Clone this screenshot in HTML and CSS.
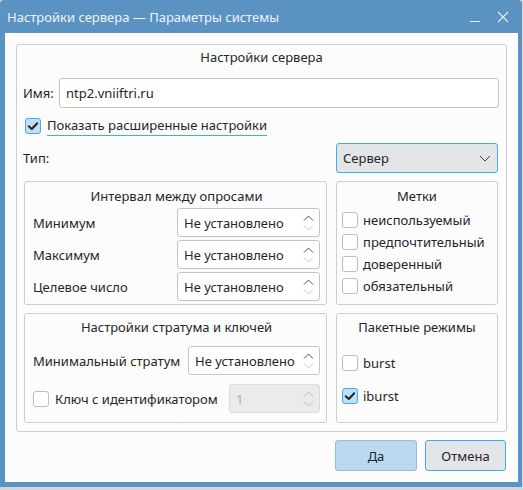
FILE: index.html
```html
<!DOCTYPE html>
<html lang="ru">
<head>
<meta charset="utf-8">
<title>Настройки сервера</title>
<link rel="stylesheet" href="styles.css">
</head>
<body>
<div class="window">
  <div class="titlebar">
    <span class="title">Настройки сервера — Параметры системы</span>
    <span class="wm-buttons">
      <svg class="wm-min" width="12" height="12" viewBox="0 0 12 12"><path d="M1 10.5 H11" stroke="#e6eef6" stroke-width="1" fill="none"/></svg>
      <svg class="wm-close" width="12" height="12" viewBox="0 0 12 12"><path d="M1 1 L11 11 M11 1 L1 11" stroke="#e6eef6" stroke-width="1.1" fill="none"/></svg>
    </span>
  </div>
  <div class="client">
    <div class="group outer">
      <div class="gtitle">Настройки сервера</div>
      <div class="name-row">
        <span class="lbl">Имя:</span>
        <div class="input">ntp2.vniiftri.ru</div>
      </div>
      <div class="check-row main-check">
        <span class="cb checked"><svg width="16" height="16" viewBox="0 0 16 16"><path d="M3.8 8.2 L6.8 11 L12.2 5.2" stroke="#232629" stroke-width="2" fill="none" stroke-linecap="round" stroke-linejoin="round"/></svg></span>
        <span class="focus-label">Показать расширенные настройки</span>
      </div>
      <div class="cols type-row">
        <span class="lbl">Тип:</span>
        <div class="combo">
          <span>Сервер</span>
          <svg width="12" height="7" viewBox="0 0 12 7"><path d="M1 1 L6 6 L11 1" stroke="#3b3e41" stroke-width="1" fill="none"/></svg>
        </div>
      </div>
      <div class="cols row1">
        <div class="group interval">
          <div class="gtitle">Интервал между опросами</div>
          <div class="form-row"><span class="lbl">Минимум</span>
            <div class="spin w143"><span>Не установлено</span>
              <span class="arrows"><svg width="11" height="16" viewBox="0 0 11 16"><path d="M1 5.5 L5.5 1 L10 5.5" stroke="#4d5053" fill="none"/><path d="M1 10.5 L5.5 15 L10 10.5" stroke="#c4c6c8" fill="none"/></svg></span>
            </div>
          </div>
          <div class="form-row"><span class="lbl">Максимум</span>
            <div class="spin w143"><span>Не установлено</span>
              <span class="arrows"><svg width="11" height="16" viewBox="0 0 11 16"><path d="M1 5.5 L5.5 1 L10 5.5" stroke="#4d5053" fill="none"/><path d="M1 10.5 L5.5 15 L10 10.5" stroke="#c4c6c8" fill="none"/></svg></span>
            </div>
          </div>
          <div class="form-row"><span class="lbl">Целевое число</span>
            <div class="spin w143"><span>Не установлено</span>
              <span class="arrows"><svg width="11" height="16" viewBox="0 0 11 16"><path d="M1 5.5 L5.5 1 L10 5.5" stroke="#4d5053" fill="none"/><path d="M1 10.5 L5.5 15 L10 10.5" stroke="#c4c6c8" fill="none"/></svg></span>
            </div>
          </div>
        </div>
        <div class="group marks">
          <div class="gtitle">Метки</div>
          <div class="check-row mark"><span class="cb"></span><span>неиспользуемый</span></div>
          <div class="check-row mark"><span class="cb"></span><span>предпочтительный</span></div>
          <div class="check-row mark"><span class="cb"></span><span>доверенный</span></div>
          <div class="check-row mark"><span class="cb"></span><span>обязательный</span></div>
        </div>
      </div>
      <div class="cols row2">
        <div class="group stratum">
          <div class="gtitle">Настройки стратума и ключей</div>
          <div class="form-row"><span class="lbl">Минимальный стратум</span>
            <div class="spin w132"><span>Не установлено</span>
              <span class="arrows"><svg width="11" height="16" viewBox="0 0 11 16"><path d="M1 5.5 L5.5 1 L10 5.5" stroke="#4d5053" fill="none"/><path d="M1 10.5 L5.5 15 L10 10.5" stroke="#c4c6c8" fill="none"/></svg></span>
            </div>
          </div>
          <div class="form-row key-row">
            <span class="check-row"><span class="cb"></span><span>Ключ с идентификатором</span></span>
            <div class="spin w91 disabled"><span>1</span>
              <span class="arrows"><svg width="11" height="16" viewBox="0 0 11 16"><path d="M1 5.5 L5.5 1 L10 5.5" stroke="#b9bbbd" fill="none"/><path d="M1 10.5 L5.5 15 L10 10.5" stroke="#b9bbbd" fill="none"/></svg></span>
            </div>
          </div>
        </div>
        <div class="group packets">
          <div class="gtitle">Пакетные режимы</div>
          <div class="check-row pk first"><span class="cb"></span><span>burst</span></div>
          <div class="check-row pk"><span class="cb checked"><svg width="16" height="16" viewBox="0 0 16 16"><path d="M3.8 8.2 L6.8 11 L12.2 5.2" stroke="#232629" stroke-width="2" fill="none" stroke-linecap="round" stroke-linejoin="round"/></svg></span><span>iburst</span></div>
        </div>
      </div>
    </div>
    <div class="buttons">
      <button class="btn ok">Да</button>
      <button class="btn cancel">Отмена</button>
    </div>
  </div>
</div>
</body>
</html>
```

FILE: styles.css
```css
* { box-sizing: border-box; }

body {
  margin: 0;
  background: #d6d6d6;
  font-family: "Noto Sans", "DejaVu Sans", sans-serif;
  font-size: 13px;
  color: #232629;
}

.window {
  width: 522px;
  height: 487px;
  background: #5a93c1;
  border-radius: 4px 4px 0 0;
  padding: 0 4px 5px 5px;
  display: flex;
  flex-direction: column;
}

.titlebar {
  height: 33px;
  flex: none;
  display: flex;
  align-items: center;
  justify-content: space-between;
  padding-left: 2px;
  color: #edf3f8;
  font-size: 13px;
}

.wm-buttons {
  display: flex;
  align-items: center;
  gap: 16px;
  padding-right: 9px;
}

.client {
  flex: 1;
  background: #fcfcfc;
  padding: 11px 11px 0 11px;
}

.group {
  border: 1px solid #cdcecf;
  border-radius: 3px;
}

.gtitle {
  text-align: center;
  line-height: 18px;
}

.outer {
  height: 388px;
  padding: 3px 7px 0 7px;
}

.lbl { white-space: nowrap; }

.name-row {
  margin-top: 12px;
  display: flex;
  align-items: center;
}
.name-row .lbl { width: 36px; margin-left: -1px; }

.input {
  flex: 1;
  height: 30px;
  background: #ffffff;
  border: 1px solid #c4c5c6;
  border-radius: 3px;
  padding-left: 6px;
  display: flex;
  align-items: center;
}

.check-row {
  display: flex;
  align-items: center;
  gap: 5px;
}

.cb {
  width: 16px;
  height: 16px;
  flex: none;
  border: 1px solid #bcbdbe;
  border-radius: 3px;
  background: #ffffff;
  position: relative;
}
.cb svg { position: absolute; left: -1px; top: -1px; }
.cb.checked {
  background: #c2def2;
  border-color: #3daee9;
}

.main-check {
  margin-top: 8px;
  height: 20px;
  margin-left: 1px;
  gap: 6px;
}
.focus-label {
  line-height: 19px;
  border-bottom: 1px solid #3daee9;
}

.cols {
  display: grid;
  grid-template-columns: 303px 162px;
  column-gap: 9px;
}

.type-row {
  margin-top: 7px;
  align-items: center;
}
.type-row .lbl { margin-left: -1px; }

.combo {
  height: 30px;
  background: #e3e5e7;
  border: 1px solid #3daee9;
  border-radius: 3px;
  padding: 0 6px 0 6px;
  display: flex;
  align-items: center;
  justify-content: space-between;
}

.row1 { margin-top: 8px; }
.row1 .group { height: 124px; }
.row2 { margin-top: 8px; }
.row2 .group { height: 110px; }

.interval .gtitle,
.marks .gtitle { margin-top: 5px; }
.stratum .gtitle,
.packets .gtitle { margin-top: 4px; }

.interval { padding: 0 6px 0 8px; }

.form-row {
  display: flex;
  align-items: center;
  justify-content: space-between;
}
.interval .form-row { margin-top: 3px; }

.spin {
  height: 29px;
  background: #ffffff;
  border: 1px solid #c4c5c6;
  border-radius: 3px;
  padding: 0 5px 0 6px;
  display: flex;
  align-items: center;
  justify-content: space-between;
  white-space: nowrap;
}
.arrows { display: flex; align-items: center; }
.w143 { width: 143px; }
.w132 { width: 132px; }
.w91 { width: 91px; }

.spin.disabled {
  background: #ebebeb;
  border-color: #dbdcdc;
  color: #a9abad;
}

.marks { padding: 0 5px; }
.mark { height: 22px; }
.marks .gtitle + .mark { margin-top: 4px; }

.stratum { padding: 0 6px 0 8px; }
.stratum .form-row:nth-child(2) { margin-top: 10px; }
.stratum .form-row { height: 29px; }
.stratum .key-row { margin-top: 9px; }
.key-row .check-row { gap: 6px; }

.packets { padding: 0 5px; }
.pk { height: 22px; }
.pk.first { margin-top: 16px; }
.pk + .pk { margin-top: 11px; }

.buttons {
  margin-top: 8px;
  margin-right: 1px;
  display: flex;
  justify-content: flex-end;
  gap: 8px;
}

.btn {
  height: 31px;
  font-family: inherit;
  font-size: 13px;
  color: #232629;
  border-radius: 3px;
  padding: 0;
}
.ok {
  width: 82px;
  background: #bcd8ee;
  border: 1px solid #8dbfe3;
}
.cancel {
  width: 81px;
  background: #e3e5e8;
  border: 1px solid #3daee9;
}
```
